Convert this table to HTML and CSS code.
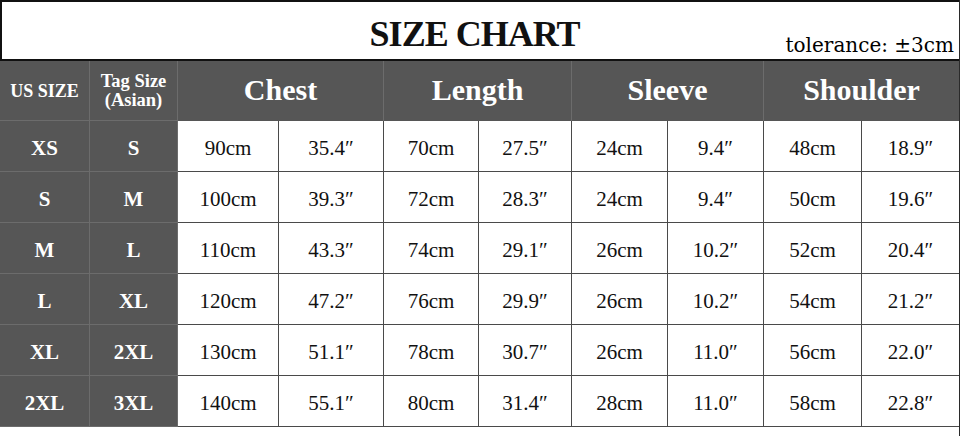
FILE: index.html
```html
<!DOCTYPE html>
<html lang="en">
<head>
<meta charset="utf-8">
<title>Size Chart</title>
<link rel="stylesheet" href="styles.css">
</head>
<body>
<div class="sheet">
  <div class="title-box">
    <span class="spacer"></span>
    <h1 class="title">SIZE CHART</h1>
    <span class="tolerance">tolerance: ±3cm</span>
  </div>
  <div class="chart">
    <div class="hd hd-small">US SIZE</div>
    <div class="hd hd-small hd-tag">Tag Size<br>(Asian)</div>
    <div class="hd hd-big span2">Chest</div>
    <div class="hd hd-big span2">Length</div>
    <div class="hd hd-big span2">Sleeve</div>
    <div class="hd hd-big span2 last">Shoulder</div>

    <div class="lbl">XS</div><div class="lbl">S</div>
    <div class="val">90cm</div><div class="val">35.4″</div>
    <div class="val">70cm</div><div class="val">27.5″</div>
    <div class="val">24cm</div><div class="val">9.4″</div>
    <div class="val">48cm</div><div class="val last">18.9″</div>

    <div class="lbl">S</div><div class="lbl">M</div>
    <div class="val">100cm</div><div class="val">39.3″</div>
    <div class="val">72cm</div><div class="val">28.3″</div>
    <div class="val">24cm</div><div class="val">9.4″</div>
    <div class="val">50cm</div><div class="val last">19.6″</div>

    <div class="lbl">M</div><div class="lbl">L</div>
    <div class="val">110cm</div><div class="val">43.3″</div>
    <div class="val">74cm</div><div class="val">29.1″</div>
    <div class="val">26cm</div><div class="val">10.2″</div>
    <div class="val">52cm</div><div class="val last">20.4″</div>

    <div class="lbl">L</div><div class="lbl">XL</div>
    <div class="val">120cm</div><div class="val">47.2″</div>
    <div class="val">76cm</div><div class="val">29.9″</div>
    <div class="val">26cm</div><div class="val">10.2″</div>
    <div class="val">54cm</div><div class="val last">21.2″</div>

    <div class="lbl">XL</div><div class="lbl">2XL</div>
    <div class="val">130cm</div><div class="val">51.1″</div>
    <div class="val">78cm</div><div class="val">30.7″</div>
    <div class="val">26cm</div><div class="val">11.0″</div>
    <div class="val">56cm</div><div class="val last">22.0″</div>

    <div class="lbl">2XL</div><div class="lbl">3XL</div>
    <div class="val">140cm</div><div class="val">55.1″</div>
    <div class="val">80cm</div><div class="val">31.4″</div>
    <div class="val">28cm</div><div class="val">11.0″</div>
    <div class="val">58cm</div><div class="val last">22.8″</div>
  </div>
</div>
</body>
</html>
```

FILE: styles.css
```css
html, body {
  margin: 0;
  padding: 0;
  background: #ffffff;
}

.sheet {
  width: 960px;
  height: 436px;
  box-sizing: border-box;
  border-right: 1px solid #2a2a2a;
  overflow: hidden;
}

.title-box {
  height: 61px;
  box-sizing: border-box;
  border-top: 2px solid #111111;
  border-left: 2px solid #111111;
  border-bottom: 2px solid #111111;
  display: grid;
  grid-template-columns: 1fr auto 1fr;
}

.title {
  margin: 0 12px 0 0;
  padding-top: 14px;
  font-family: "Liberation Serif", "Times New Roman", serif;
  font-weight: bold;
  font-size: 36px;
  letter-spacing: -1px;
  line-height: 36px;
  color: #111111;
  align-self: start;
}

.tolerance {
  justify-self: end;
  align-self: end;
  padding: 0 5px 2px 0;
  font-family: "DejaVu Serif", "Liberation Serif", serif;
  font-size: 20px;
  line-height: 24px;
  color: #000000;
}

.chart {
  display: grid;
  grid-template-columns: 90px 88px 101px 105px 95px 93px 96px 96px 98px 97px;
  grid-template-rows: 60px repeat(6, 51px);
}

.chart > div {
  box-sizing: border-box;
  display: flex;
  align-items: center;
  justify-content: center;
  text-align: center;
}

.hd {
  background: #565656;
  color: #ffffff;
  font-family: "Liberation Serif", "Times New Roman", serif;
  font-weight: bold;
  border-right: 1px solid #6c6c6c;
}

.hd-small {
  font-size: 18px;
  line-height: 18px;
  border-bottom: 1px solid #6c6c6c;
}

.hd-tag {
  font-size: 18.5px;
  line-height: 19px;
  padding-top: 1px;
}

.hd-big {
  font-size: 30px;
  padding-bottom: 2px;
}

.span2 {
  grid-column: span 2;
}

.lbl {
  background: #565656;
  color: #ffffff;
  font-family: "Liberation Serif", "Times New Roman", serif;
  font-weight: bold;
  font-size: 21px;
  padding-top: 4px;
  border-right: 1px solid #6c6c6c;
  border-bottom: 1px solid #6c6c6c;
}

.val {
  background: #ffffff;
  color: #111111;
  font-family: "Liberation Serif", "Times New Roman", serif;
  font-size: 21px;
  padding-top: 4px;
  border-right: 1px solid #4a4a4a;
  border-bottom: 1px solid #4a4a4a;
}

.chart > .last {
  border-right: none;
}
```
